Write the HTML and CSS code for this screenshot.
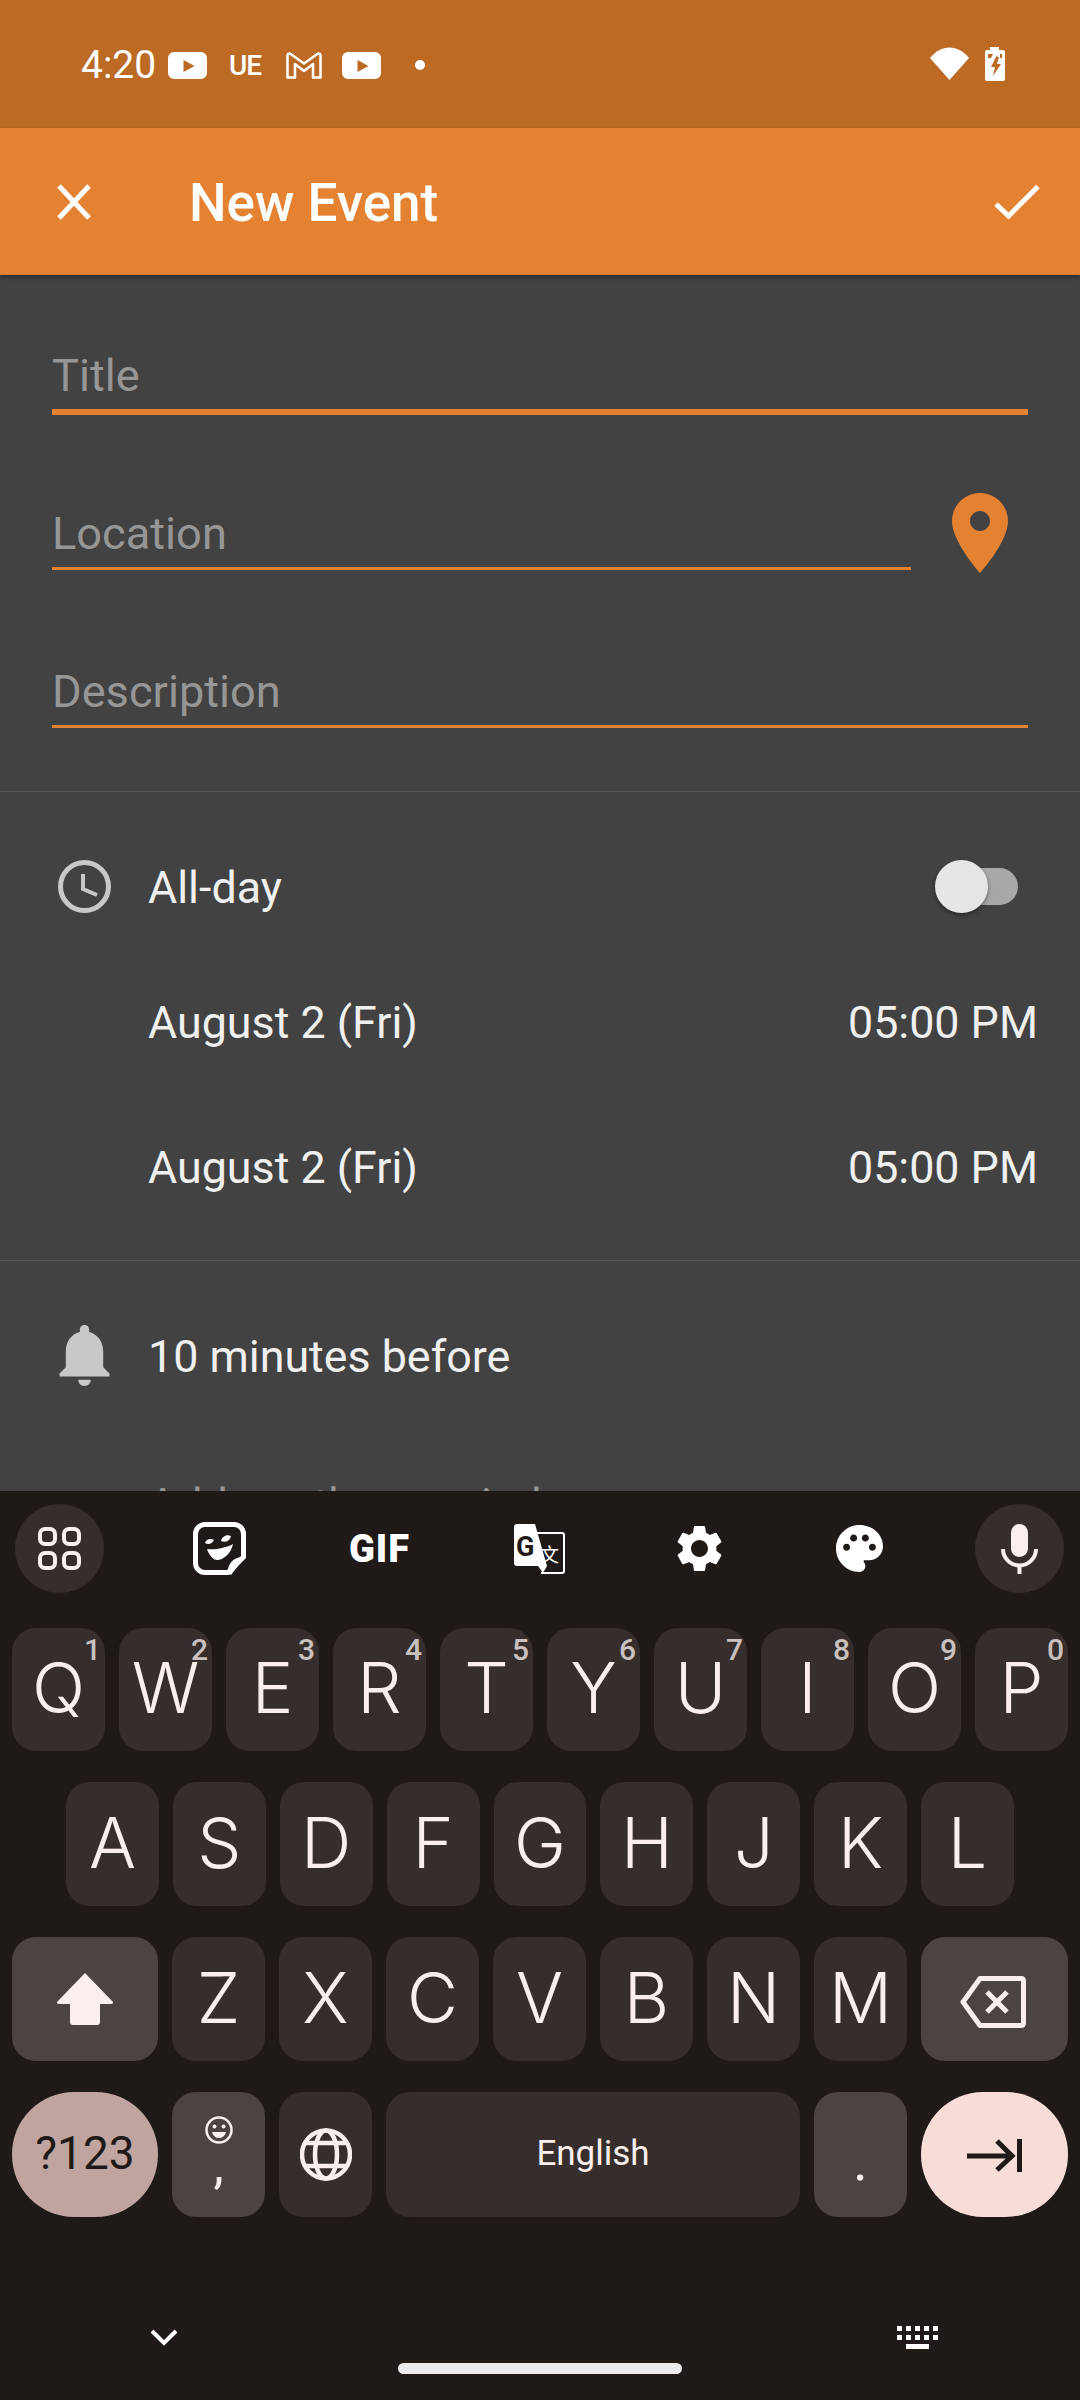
FILE: index.html
```html
<!DOCTYPE html>
<html lang="en">
<head>
    <meta charset="UTF-8">
    <meta name="viewport" content="width=device-width, initial-scale=1.0">
    <title>New Event</title>
    <link rel="stylesheet" href="styles.css">
</head>
<body>
<div class="screen">
    <div class="status">
        <span class="clock-time">4:20</span>
        <svg class="st-yt" width="39" height="27" viewBox="0 0 39 27"><path fill="#fff" fill-rule="evenodd" d="M6 0h27a6 6 0 0 1 6 6v15a6 6 0 0 1-6 6H6a6 6 0 0 1-6-6V6a6 6 0 0 1 6-6zM15.500 8v12l11-6z"/></svg>
        <span class="st-ue">UE</span>
        <svg class="st-mail" width="36" height="27" viewBox="0 0 36 27"><path fill="none" stroke="#fff" stroke-width="2.500" stroke-linejoin="round" d="M1.500 25.500V3.500Q1.500 1.500 4 1.500L18 11.500 32 1.500Q34.500 1.500 34.500 3.500V25.500H27V12L18 19 9 12V25.500z"/></svg>
        <svg class="st-yt2" width="39" height="27" viewBox="0 0 39 27"><path fill="#fff" fill-rule="evenodd" d="M6 0h27a6 6 0 0 1 6 6v15a6 6 0 0 1-6 6H6a6 6 0 0 1-6-6V6a6 6 0 0 1 6-6zM15.500 8v12l11-6z"/></svg>
        <span class="st-dot"></span>
        <svg class="st-wifi" width="39" height="33" viewBox="0 0 39 33"><path fill="#fff" d="M19.500 33L0 11C11-3 28-3 39 11z"/></svg>
        <svg class="st-batt" width="20" height="34" viewBox="0 0 20 34"><path fill="#fff" fill-rule="evenodd" d="M5 0h9v3h4a2 2 0 0 1 2 2v27a2 2 0 0 1-2 2H2a2 2 0 0 1-2-2V5a2 2 0 0 1 2-2h3zM12 8L6 20h4L8 29 16 17h-4l2-7h-2zM3 7v4h3l2-4zM15 7v4h2V7z"/></svg>
    </div>

    <div class="appbar">
        <svg class="ab-close" width="34" height="36" viewBox="0 0 34 36"><path fill="none" stroke="#fff" stroke-width="5" d="M2 2l30 32M32 2L2 34"/></svg>
        <h1 class="ab-title">New Event</h1>
        <svg class="ab-check" width="46" height="35" viewBox="0 0 46 35"><path fill="none" stroke="#fff" stroke-width="5" d="M2 20l12.600 12L44 2.500"/></svg>
    </div>

    <div class="form">
        <div class="field field-title">Title</div>
        <div class="location-row">
            <div class="field field-location">Location</div>
            <svg class="pin" width="56" height="80" viewBox="5 2 14 20"><path fill="#e58231" fill-rule="evenodd" d="M12 2C8.130 2 5 5.130 5 9c0 5.250 7 13 7 13s7-7.750 7-13c0-3.870-3.130-7-7-7zm0 9.500c-1.380 0-2.500-1.120-2.500-2.500s1.120-2.500 2.500-2.500 2.500 1.120 2.500 2.500-1.120 2.500-2.500 2.500z"/></svg>
        </div>
        <div class="field field-desc">Description</div>

        <div class="divider divider-first"></div>

        <div class="row row-allday">
            <svg class="row-icon" width="53" height="53" viewBox="0 0 53 53"><circle cx="26.500" cy="26.500" r="24" fill="none" stroke="#c8c8c8" stroke-width="5"/><path fill="none" stroke="#c8c8c8" stroke-width="4" d="M25 14v15l14 6"/></svg>
            <span class="row-text">All-day</span>
            <span class="switch"><span class="switch-thumb"></span></span>
        </div>
        <div class="row row-indent row-date1">
            <span class="row-text">August 2 (Fri)</span>
            <span>05:00 PM</span>
        </div>
        <div class="row row-indent row-date2">
            <span class="row-text">August 2 (Fri)</span>
            <span>05:00 PM</span>
        </div>

        <div class="divider divider-second"></div>

        <div class="row row-remind">
            <svg class="row-icon" width="53" height="61" viewBox="3.500 2.500 17 19.500"><path fill="#c8c8c8" d="M12 22c1.100 0 2-.9 2-2h-4c0 1.100.9 2 2 2zm6-6v-5c0-3.070-1.630-5.640-4.500-6.320V4c0-.83-.67-1.500-1.500-1.500s-1.500.67-1.500 1.500v.68C7.640 5.360 6 7.920 6 11v5l-2 2v1h16v-1l-2-2z"/></svg>
            <span class="row-text">10 minutes before</span>
        </div>
        <div class="row row-indent row-add">Add another reminder</div>
    </div>

    <div class="keyboard">
        <div class="kb-tools">
            <div class="tool tool-round">
                <svg width="44" height="43" viewBox="0 0 44 43"><g fill="none" stroke="#fbefed" stroke-width="4"><rect x="2" y="2" width="15" height="15" rx="5"/><rect x="26" y="2" width="15" height="15" rx="5"/><rect x="2" y="26" width="15" height="15" rx="5"/><rect x="26" y="26" width="15" height="15" rx="5"/></g></svg>
            </div>
            <div class="tool">
                <svg width="53" height="53" viewBox="0 0 53 53"><path fill="none" stroke="#fff" stroke-width="5" d="M12 2.500h29a9.500 9.500 0 0 1 9.500 9.500v23L35 50.500H12A9.500 9.500 0 0 1 2.500 41V12A9.500 9.500 0 0 1 12 2.500z"/><path fill="#fff" d="M35 51c-1-9 6-17 17-16L38 53zM14 27c8 1 19-1 26-5-2 10-10 16-16 16-4 0-8-5-10-11zM12 21c1-4 6-5 9-3-2 4-6 5-9 3zM28 19c1-4 5-7 10-5-1 5-6 7-10 5z"/></svg>
            </div>
            <div class="tool"><span class="gif">GIF</span></div>
            <div class="tool">
                <svg width="51" height="50" viewBox="0 0 51 50"><path fill="none" stroke="#fff" stroke-width="2" d="M22 9h26a2 2 0 0 1 2 2v36a2 2 0 0 1-2 2H27"/><path fill="#fff" d="M3 0h18l12 42-4 7-5-7H3a3 3 0 0 1-3-3V3a3 3 0 0 1 3-3z"/><text class="tr-g" x="2" y="32">G</text><text class="tr-wen" x="26" y="38">文</text></svg>
            </div>
            <div class="tool">
                <svg width="47" height="47" viewBox="2.500 2 19 20"><path fill="#fff" fill-rule="evenodd" d="M19.140 12.940c.04-.3.06-.61.06-.94 0-.32-.02-.64-.07-.94l2.030-1.580c.18-.14.23-.41.12-.61l-1.920-3.320c-.12-.22-.37-.29-.59-.22l-2.390.96c-.5-.38-1.030-.7-1.620-.94l-.36-2.540c-.04-.24-.24-.41-.48-.41h-3.840c-.24 0-.43.17-.47.41l-.36 2.540c-.59.24-1.130.57-1.620.94l-2.390-.96c-.22-.08-.47 0-.59.22L2.740 8.870c-.12.21-.08.47.12.61l2.030 1.580c-.05.3-.09.63-.09.94s.02.64.07.94l-2.030 1.580c-.18.14-.23.41-.12.61l1.920 3.320c.12.22.37.29.59.22l2.390-.96c.5.38 1.030.7 1.620.94l.36 2.540c.05.24.24.41.48.41h3.840c.24 0 .44-.17.47-.41l.36-2.540c.59-.24 1.130-.56 1.620-.94l2.390.96c.22.08.47 0 .59-.22l1.920-3.320c.12-.22.07-.47-.12-.61l-2.010-1.580zM12 15.600c-1.980 0-3.600-1.620-3.600-3.600s1.620-3.600 3.600-3.600 3.600 1.620 3.600 3.600-1.620 3.600-3.600 3.600z"/></svg>
            </div>
            <div class="tool">
                <svg width="47" height="47" viewBox="2 2 20 20"><path fill="#fff" fill-rule="evenodd" d="M12 2C6.490 2 2 6.490 2 12s4.490 10 10 10c1.380 0 2.500-1.120 2.500-2.500 0-.61-.23-1.200-.64-1.670-.08-.1-.13-.21-.13-.33 0-.28.22-.5.5-.5H16c3.310 0 6-2.690 6-6 0-4.960-4.490-9-10-9zm-5.500 11c-.83 0-1.500-.67-1.500-1.500S5.670 10 6.500 10 8 10.670 8 11.500 7.330 13 6.500 13zm3-4C8.670 9 8 8.330 8 7.500S8.670 6 9.500 6s1.500.67 1.500 1.500S10.330 9 9.500 9zm5 0c-.83 0-1.500-.67-1.500-1.500S13.670 6 14.500 6s1.500.67 1.500 1.500S15.330 9 14.500 9zm3 4c-.83 0-1.500-.67-1.500-1.500s.67-1.500 1.500-1.500 1.500.67 1.500 1.500-.67 1.500-1.500 1.500z"/></svg>
            </div>
            <div class="tool tool-round">
                <svg width="37" height="50" viewBox="0 0 37 50"><rect x="10" y="0" width="17" height="33" rx="8.500" fill="#fbefed"/><path fill="none" stroke="#fbefed" stroke-width="4" d="M2 25a16.500 16.500 0 0 0 33 0M18.500 41v9"/></svg>
            </div>
        </div>

        <div class="kb-rows">
            <div class="kb-row">
                <div class="key">Q<sup class="hint">1</sup></div>
                <div class="key">W<sup class="hint">2</sup></div>
                <div class="key">E<sup class="hint">3</sup></div>
                <div class="key">R<sup class="hint">4</sup></div>
                <div class="key">T<sup class="hint">5</sup></div>
                <div class="key">Y<sup class="hint">6</sup></div>
                <div class="key">U<sup class="hint">7</sup></div>
                <div class="key">I<sup class="hint">8</sup></div>
                <div class="key">O<sup class="hint">9</sup></div>
                <div class="key">P<sup class="hint">0</sup></div>
            </div>
            <div class="kb-row kb-row-home">
                <div class="key">A</div>
                <div class="key">S</div>
                <div class="key">D</div>
                <div class="key">F</div>
                <div class="key">G</div>
                <div class="key">H</div>
                <div class="key">J</div>
                <div class="key">K</div>
                <div class="key">L</div>
            </div>
            <div class="kb-row">
                <div class="key key-wide key-mod">
                    <svg width="56" height="52" viewBox="0 0 56 52"><path fill="#fbefed" d="M28 0l28 29q.5 2-2 2H43v18q0 3-3 3H16q-3 0-3-3V31H2q-2.500 0-2-2z"/></svg>
                </div>
                <div class="key">Z</div>
                <div class="key">X</div>
                <div class="key">C</div>
                <div class="key">V</div>
                <div class="key">B</div>
                <div class="key">N</div>
                <div class="key">M</div>
                <div class="key key-wide-end key-mod">
                    <svg class="del-icon" width="66" height="52" viewBox="0 0 66 52"><path fill="none" stroke="#fbefed" stroke-width="5" stroke-linejoin="round" d="M20 2.500h41q2.500 0 2.500 2.500v42q0 2.500-2.500 2.500H20L3 26z"/><path fill="none" stroke="#fbefed" stroke-width="5" d="M27 16l20 20M47 16L27 36"/></svg>
                </div>
            </div>
            <div class="kb-row">
                <div class="key key-wide key-sym">?123</div>
                <div class="key key-mod key-comma">
                    <svg width="28" height="28" viewBox="0 0 28 28"><circle cx="14" cy="14" r="12.500" fill="none" stroke="#fbefed" stroke-width="2.500"/><circle cx="9.500" cy="10.500" r="2" fill="#fbefed"/><circle cx="18.500" cy="10.500" r="2" fill="#fbefed"/><path fill="#fbefed" d="M7 16h14c-1 4-4 6-7 6s-6-2-7-6z"/></svg>
                    <span class="comma">,</span>
                </div>
                <div class="key key-globe">
                    <svg width="52" height="53" viewBox="0 0 52 53"><g fill="none" stroke="#fbefed" stroke-width="4.500"><circle cx="26" cy="26.500" r="24"/><ellipse cx="26" cy="26.500" rx="11" ry="24"/><path d="M4 15h44M4 38h44"/></g></svg>
                </div>
                <div class="key key-space">English</div>
                <div class="key key-mod key-period">.</div>
                <div class="key key-wide-end key-enter">
                    <svg class="enter-icon" width="55" height="33" viewBox="0 0 55 33"><path fill="none" stroke="#1f1a18" stroke-width="5" d="M0 17h44M30 2l15 15-15 14"/><rect x="50" y="0" width="5" height="33" fill="#1f1a18"/></svg>
                </div>
            </div>
        </div>

        <div class="kb-nav">
            <svg width="28" height="17" viewBox="0 0 28 17"><path fill="none" stroke="#fff" stroke-width="4" d="M2 2l12 12L26 2"/></svg>
            <svg width="41" height="23" viewBox="0 0 41 23"><g fill="#fff"><rect x="0" width="5" height="5"/><rect x="9" width="5" height="5"/><rect x="18" width="5" height="5"/><rect x="27" width="5" height="5"/><rect x="36" width="5" height="5"/><rect x="0" y="9" width="5" height="5"/><rect x="9" y="9" width="5" height="5"/><rect x="18" y="9" width="5" height="5"/><rect x="27" y="9" width="5" height="5"/><rect x="36" y="9" width="5" height="5"/><rect x="9" y="18" width="23" height="5"/></g></svg>
        </div>
        <div class="home-pill"></div>
    </div>
</div>
</body>
</html>
```

FILE: styles.css
```css
* {
    box-sizing: border-box;
}
body {
    margin: 0;
    font-family: Roboto, "Liberation Sans", sans-serif;
    background: #424242;
}
.screen {
    width: 1080px;
    height: 2400px;
    display: flex;
    flex-direction: column;
    overflow: hidden;
}

/* status bar */
.status {
    height: 128px;
    flex: none;
    display: flex;
    align-items: center;
    background: #bc6a24;
    color: #fff;
    padding: 2px 0 0 81px;
}
.clock-time {
    font-size: 39px;
    width: 87px;
}
.st-ue {
    font-size: 28px;
    font-weight: 500;
    letter-spacing: -1px;
    width: 34px;
    margin-left: 22px;
}
.st-mail {
    margin-left: 23px;
}
.st-yt2 {
    margin-left: 20px;
}
.st-dot {
    width: 10px;
    height: 10px;
    border-radius: 50%;
    background: #fff;
    margin-left: 34px;
}
.st-wifi {
    margin-left: 505px;
    margin-top: -3px;
}
.st-batt {
    margin-left: 16px;
    margin-top: -2px;
}

/* app bar */
.appbar {
    height: 147px;
    flex: none;
    display: flex;
    align-items: center;
    background: #e58231;
    padding-left: 57px;
    box-shadow: 0 2px 4px rgba(0, 0, 0, 0.35);
    position: relative;
}
.ab-title {
    margin: 2px 0 0 98px;
    font-size: 53px;
    font-weight: 500;
    color: #fff;
}
.ab-check {
    margin-left: auto;
    margin-right: 40px;
}

/* form */
.form {
    height: 1216px;
    flex: none;
    overflow: hidden;
    font-size: 44.800px;
    line-height: 54px;
    color: #f0f0f0;
    padding-top: 74px;
}
.field {
    color: #969696;
    font-size: 45.200px;
    border-bottom: 3px solid #e58231;
    padding-bottom: 6px;
}
.field-title {
    margin: 0 52px;
    border-bottom-width: 6px;
    padding-bottom: 6px;
}
.location-row {
    display: flex;
    align-items: flex-end;
    height: 63px;
    margin: 92px 0 0 52px;
}
.field-location {
    width: 859px;
}
.pin {
    flex: none;
    margin: 0 0 -3px 41px;
}
.field-desc {
    margin: 95px 52px 0;
    padding-bottom: 6px;
}
.divider {
    height: 1px;
    background: #555;
}
.divider-first {
    margin-top: 63px;
}
.divider-second {
    margin-top: 65px;
}
.row {
    display: flex;
    align-items: center;
    height: 54px;
    padding: 0 42px 0 58px;
}
.row-indent {
    padding-left: 148px;
    justify-content: space-between;
}
.row-icon {
    flex: none;
    margin: -3px 37px 0 0;
}
.row-allday {
    margin-top: 69px;
}
.row-date1 {
    margin-top: 81px;
}
.row-date2 {
    margin-top: 91px;
}
.row-remind {
    margin-top: 68.500px;
}
.row-add {
    margin-top: 94.500px;
    color: #969696;
}
.switch {
    position: relative;
    width: 73px;
    height: 37px;
    margin: -4px 20px 0 auto;
    border-radius: 19px;
    background: #a8a8a8;
}
.switch-thumb {
    position: absolute;
    left: -10px;
    top: -8px;
    width: 53px;
    height: 53px;
    border-radius: 50%;
    background: #e6e6e6;
    box-shadow: 0 2px 4px rgba(0, 0, 0, 0.4);
}

/* keyboard */
.keyboard {
    flex: 1;
    background: #1f1a18;
    color: #fbefed;
    position: relative;
}
.kb-tools {
    display: flex;
    justify-content: space-between;
    padding: 13px 16px 0 15px;
}
.tool {
    width: 89px;
    height: 89px;
    display: flex;
    align-items: center;
    justify-content: center;
}
.tool-round {
    border-radius: 50%;
    background: #362e2d;
}
.gif {
    font-size: 38px;
    font-weight: 900;
    color: #fff;
    letter-spacing: 1px;
}
.tr-g {
    font-family: Roboto, sans-serif;
    font-size: 27px;
    font-weight: 700;
    fill: #1f1a18;
}
.tr-wen {
    font-family: "Noto Sans CJK SC", sans-serif;
    font-size: 19px;
    fill: #fff;
}
.kb-rows {
    display: flex;
    flex-direction: column;
    gap: 31px;
    margin-top: 35px;
}
.kb-row {
    display: flex;
    gap: 14px;
    height: 124px;
    padding: 0 12px;
}
.kb-row:first-child {
    height: 123px;
}
.kb-row:last-child {
    height: 125px;
}
.kb-row-home {
    padding: 0 66px;
}
.key {
    position: relative;
    flex: 1 1 0;
    display: flex;
    align-items: center;
    justify-content: center;
    padding-bottom: 3px;
    border-radius: 24px;
    background: #362e2d;
    font-family: Inter, Roboto, sans-serif;
    font-size: 70px;
    font-weight: 350;
    line-height: 1;
}
.key-wide {
    flex: none;
    width: 146px;
}
.key-wide-end {
    flex: none;
    width: 147px;
}
.key-mod {
    background: #4c4443;
    padding-bottom: 0;
}
.key-globe {
    padding-bottom: 0;
}
.key-sym {
    background: #c0a4a0;
    color: #1f1a18;
    font-family: Roboto, sans-serif;
    font-size: 46px;
    font-weight: 400;
    border-radius: 62px;
}
.key-enter {
    background: #f8dcd8;
    border-radius: 62px;
    padding-bottom: 0;
}
.enter-icon {
    margin-top: 2px;
}
.del-icon {
    margin: 5px 4px 0 0;
}
.key-comma {
    flex-direction: column;
    justify-content: flex-start;
    padding-top: 24px;
}
.comma {
    font-family: Roboto, sans-serif;
    font-size: 52px;
    font-weight: 400;
    line-height: 40px;
    margin-top: 2px;
}
.key-space {
    flex: none;
    width: 414px;
    font-family: Roboto, sans-serif;
    font-size: 35px;
    font-weight: 400;
}
.key-period {
    font-family: Roboto, sans-serif;
    font-size: 56px;
    font-weight: 400;
    padding-top: 12px;
}
.hint {
    position: absolute;
    top: 7px;
    right: 4px;
    font-family: Roboto, sans-serif;
    font-size: 30px;
    font-weight: 500;
    line-height: 29px;
    color: #c9c1bf;
}
.kb-nav {
    display: flex;
    justify-content: space-between;
    align-items: center;
    margin-top: 109px;
    padding: 0 142px 0 150px;
}
.home-pill {
    width: 284px;
    height: 11px;
    margin: 14px auto 0;
    border-radius: 6px;
    background: #ebebeb;
}
```
